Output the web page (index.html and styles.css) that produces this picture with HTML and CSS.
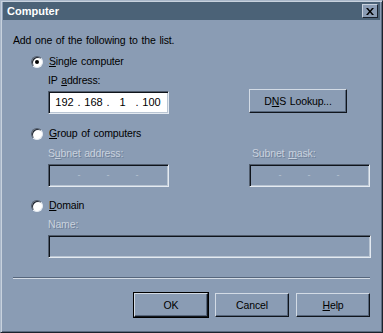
FILE: index.html
```html
<!DOCTYPE html>
<html>
<head>
<meta charset="utf-8">
<link rel="stylesheet" href="styles.css">
</head>
<body>
<div class="dialog">
  <div class="titlebar">
    <span class="title">Computer</span>
    <span class="close"><svg width="8" height="7" viewBox="0 0 8 7"><path d="M0 0h2l2 2.5L6 0h2L5 3.5 8 7H6L4 4.5 2 7H0l3-3.5z" fill="#000"/></svg></span>
  </div>
  <div class="content">
    <div class="intro">Add one of the following to the list.</div>

    <div class="radio-row r1"><span class="radio checked"></span><span><u>S</u>ingle computer</span></div>
    <div class="label l1">IP <u>a</u>ddress:</div>
    <div class="ip-row">
      <div class="field ip">
        <span class="seg">192</span><span class="dot">.</span>
        <span class="seg">168</span><span class="dot">.</span>
        <span class="seg">1</span><span class="dot">.</span>
        <span class="seg">100</span>
      </div>
      <div class="btn dns">D<u>N</u>S Lookup...</div>
    </div>

    <div class="radio-row r2"><span class="radio"></span><span><u>G</u>roup of computers</span></div>
    <div class="pair">
      <div class="col">
        <div class="sublabel disabled">S<u>u</u>bnet address:</div>
        <div class="field off"><span class="seg"></span><span class="dot">-</span><span class="seg"></span><span class="dot">-</span><span class="seg"></span><span class="dot">-</span><span class="seg"></span></div>
      </div>
      <div class="col">
        <div class="sublabel disabled">Subnet <u>m</u>ask:</div>
        <div class="field off"><span class="seg"></span><span class="dot">-</span><span class="seg"></span><span class="dot">-</span><span class="seg"></span><span class="dot">-</span><span class="seg"></span></div>
      </div>
    </div>

    <div class="radio-row r3"><span class="radio"></span><span><u>D</u>omain</span></div>
    <div class="label disabled l3">Name:</div>
    <div class="field off name"></div>

    <div class="separator"></div>

    <div class="buttons">
      <div class="btn default">OK</div>
      <div class="btn">Cancel</div>
      <div class="btn"><u>H</u>elp</div>
    </div>
  </div>
</div>
</body>
</html>
```
FILE: styles.css
```css
* { box-sizing: border-box; }
html, body { margin: 0; padding: 0; }
body {
  width: 383px;
  height: 333px;
  overflow: hidden;
  background: #8a9cb4;
  font: 10.5px "Liberation Sans", Arial, sans-serif;
  letter-spacing: -0.15px;
  word-spacing: 1px;
  color: #000;
}
u { text-decoration: underline; text-underline-offset: 1px; }
.dialog {
  width: 383px;
  height: 333px;
  border: 1px solid;
  border-color: #a9b7c9 #1a222d #1a222d #a9b7c9;
  box-shadow: inset 1px 1px #c8d2de, inset -1px -1px #5b6b80;
  padding: 1px 2px;
  display: flex;
  flex-direction: column;
}
.titlebar {
  height: 18px;
  background: #4b6277;
  display: flex;
  align-items: center;
  justify-content: space-between;
  padding: 0 2px 0 4px;
}
.title {
  color: #fff;
  font-weight: bold;
  font-size: 11px;
  letter-spacing: 0;
}
.close {
  width: 16px;
  height: 14px;
  background: #8a9cb4;
  border: 1px solid;
  border-color: #c8d2de #1a222d #1a222d #c8d2de;
  display: flex;
  align-items: center;
  justify-content: center;
}
.content {
  padding: 0 10px 0 10px;
  display: flex;
  flex-direction: column;
  line-height: 13px;
}
.intro { margin-top: 14px; }
.radio-row {
  display: flex;
  align-items: center;
  gap: 6px;
  padding-left: 18px;
  height: 13px;
}
.r1 { margin-top: 8px; }
.r2 { margin-top: 13px; }
.r3 { margin-top: 12px; }
.radio {
  width: 12px;
  height: 12px;
  border-radius: 50%;
  background: #fff;
  border: 1px solid;
  border-color: #505c6c #e4eaf1 #e4eaf1 #505c6c;
  box-shadow: inset 1px 1px #1e2530;
  position: relative;
}
.radio.checked::after {
  content: "";
  position: absolute;
  left: 3px;
  top: 3px;
  width: 4px;
  height: 4px;
  border-radius: 50%;
  background: #000;
}
.label { padding-left: 35px; }
.l1 { margin-top: 6px; }
.l3 { margin-top: 6px; }
.sublabel { padding-left: 0; }
.col:nth-child(2) .sublabel { padding-left: 3px; }
.disabled {
  color: #c9d2de;
  text-shadow: 1px 1px #6f8098;
}
.ip-row {
  display: flex;
  align-items: flex-start;
  padding-left: 35px;
  margin-top: 2px;
}
.field {
  width: 121px;
  height: 23px;
  border: 1px solid;
  border-color: #505c6c #e4eaf1 #e4eaf1 #505c6c;
  box-shadow: inset 1px 1px #0f141b, inset -1px -1px #b9c5d3;
  display: flex;
  align-items: center;
  padding-left: 4px;
}
.ip { background: #fff; margin-top: 2px; font-size: 11px; letter-spacing: 0; word-spacing: 0; }
.seg { width: 23px; text-align: center; }
.dot { width: 6px; text-align: center; }
.off { background: #8a9cb4; }
.off .dot { color: #b9c5d3; font-size: 9px; }
.btn {
  height: 24px;
  border: 1px solid;
  border-color: #d3dbe5 #10151c #10151c #d3dbe5;
  box-shadow: inset -1px -1px #56667c;
  display: flex;
  align-items: center;
  justify-content: center;
}
.dns { width: 98px; margin-left: 80px; height: 24px; }
.pair {
  display: flex;
  padding-left: 35px;
  margin-top: 7px;
  gap: 80px;
}
.col { display: flex; flex-direction: column; gap: 4px; }
.name { width: 323px; margin-left: 35px; margin-top: 4px; }
.separator {
  margin-top: 19px;
  height: 2px;
  border-top: 1px solid #56667c;
  border-bottom: 1px solid #d3dbe5;
  width: 357px;
}
.buttons {
  display: flex;
  justify-content: flex-end;
  gap: 7px;
  margin-top: 14px;
  padding-right: 0;
}
.buttons .btn { width: 74px; }
.btn.default {
  outline: 1px solid #000;
}
```
